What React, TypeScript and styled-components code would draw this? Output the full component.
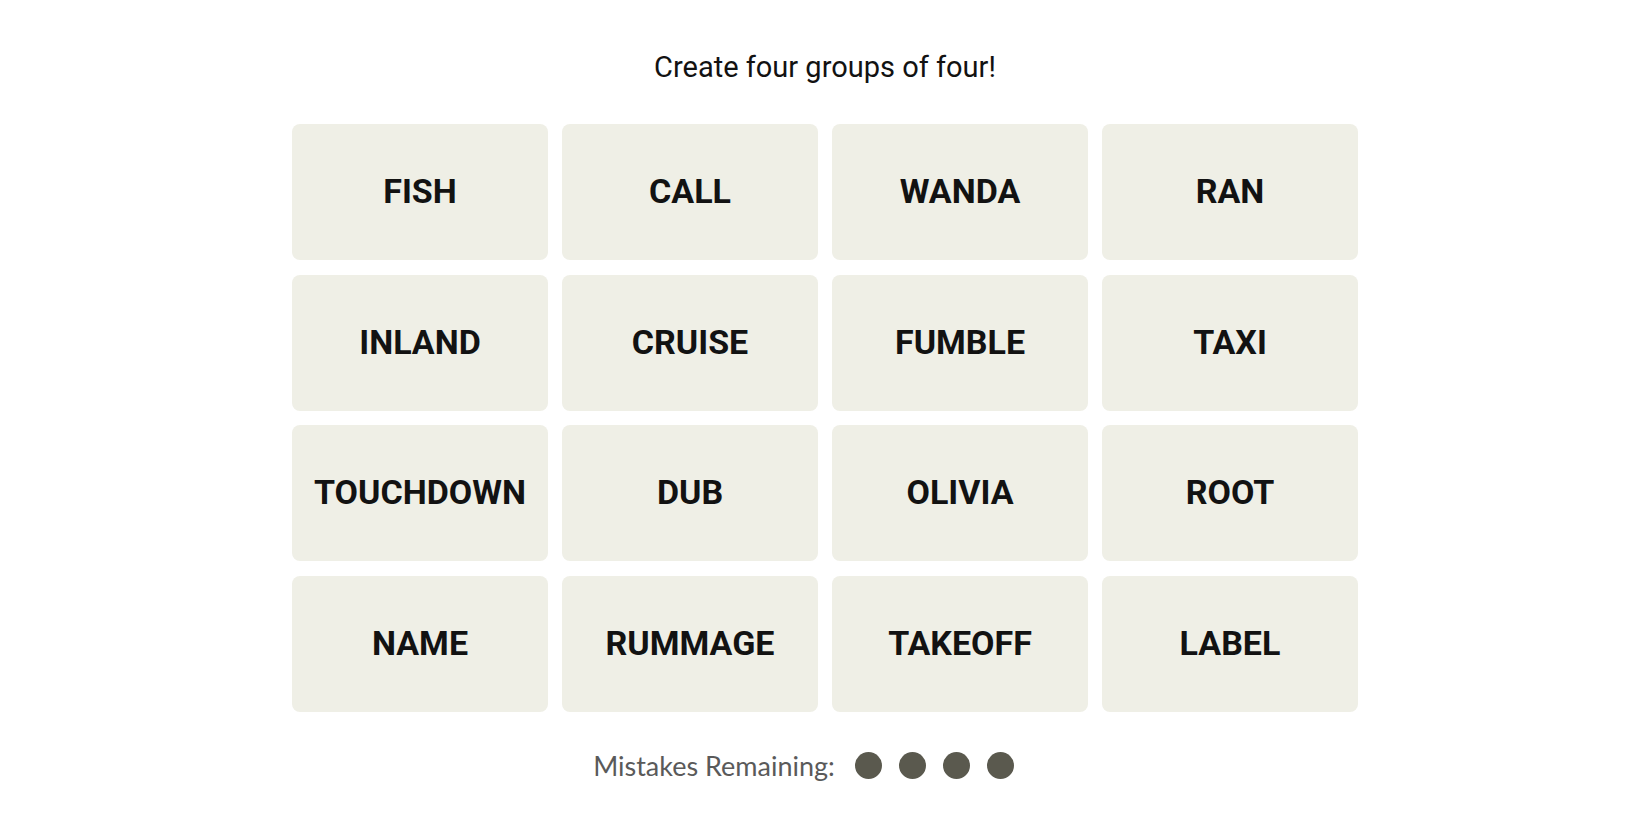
import React from 'react'
import styled, { createGlobalStyle } from 'styled-components'

const GlobalStyle = createGlobalStyle`
  html, body {
    margin: 0;
    padding: 0;
    background: #ffffff;
  }
`

const Page = styled.main`
  display: flex;
  flex-direction: column;
  align-items: center;
  min-height: 100vh;
  padding-top: 51px;
  box-sizing: border-box;
`

const Title = styled.h2`
  margin: 0 0 41px 0;
  font-family: Roboto, 'Liberation Sans', sans-serif;
  font-weight: 400;
  font-size: 29px;
  line-height: 32px;
  color: #121212;
`

const Board = styled.div`
  display: grid;
  grid-template-columns: repeat(4, 256px);
  grid-auto-rows: 136px;
  column-gap: 14px;
  row-gap: 14.5px;
`

const Tile = styled.button`
  display: flex;
  align-items: center;
  justify-content: center;
  border: none;
  border-radius: 8px;
  background: #efefe6;
  color: #121212;
  font-family: Roboto, 'Liberation Sans', sans-serif;
  font-weight: 700;
  font-size: 34px;
  text-transform: uppercase;
  cursor: pointer;
  padding: 0 0 2px 0;
`

const Mistakes = styled.div`
  display: flex;
  align-items: center;
  gap: 20px;
  margin-top: 38px;
  padding-right: 43px;
  height: 32px;
`

const MistakesLabel = styled.span`
  font-family: Lato, 'Liberation Sans', sans-serif;
  font-size: 27px;
  line-height: 32px;
  color: #5a5a5a;
`

const Dots = styled.div`
  display: flex;
  gap: 17px;
`

const Dot = styled.span`
  width: 27px;
  height: 27px;
  border-radius: 50%;
  background: #5a594e;
`

const words = [
  'FISH', 'CALL', 'WANDA', 'RAN',
  'INLAND', 'CRUISE', 'FUMBLE', 'TAXI',
  'TOUCHDOWN', 'DUB', 'OLIVIA', 'ROOT',
  'NAME', 'RUMMAGE', 'TAKEOFF', 'LABEL',
]

export default function App() {
  return (
    <>
      <GlobalStyle />
      <Page>
        <Title>Create four groups of four!</Title>
        <Board>
          {words.map((w) => (
            <Tile key={w}>{w}</Tile>
          ))}
        </Board>
        <Mistakes>
          <MistakesLabel>Mistakes Remaining:</MistakesLabel>
          <Dots>
            {[0, 1, 2, 3].map((i) => (
              <Dot key={i} />
            ))}
          </Dots>
        </Mistakes>
      </Page>
    </>
  )
}
